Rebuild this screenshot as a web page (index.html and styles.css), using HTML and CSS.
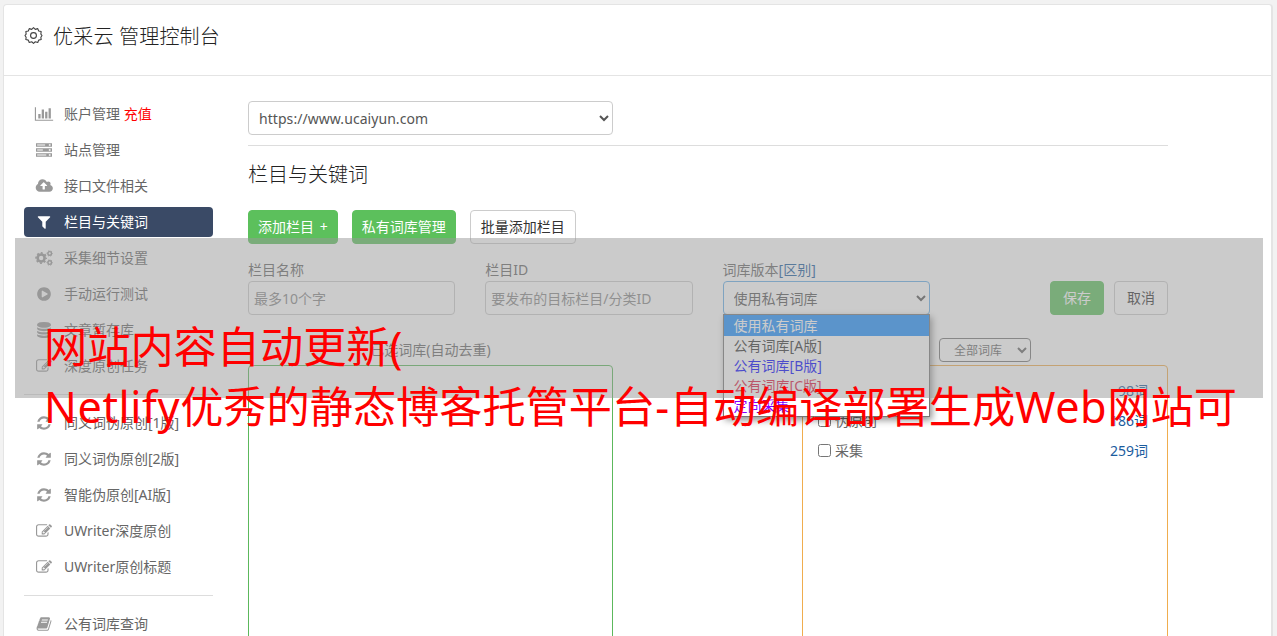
FILE: index.html
```html
<!DOCTYPE html>
<html lang="zh-CN">
<head>
  <meta charset="UTF-8">
  <title>优采云 管理控制台</title>
  <meta name="viewport" content="width=device-width, initial-scale=1.0">
  <link rel="stylesheet" href="styles.css">
</head>
<body>
  <svg class="sprite" xmlns="http://www.w3.org/2000/svg">
    <symbol id="i-chart" viewBox="0 0 2048 1792"><path d="M640 896v512h-256v-512h256zm384-512v1024h-256v-1024h256zm1024 1152v128h-2048v-1536h128v1408h1920zm-640-896v768h-256v-768h256zm384-384v1152h-256v-1152h256z"/></symbol>
    <symbol id="i-server" viewBox="0 0 1792 1792"><path fill-rule="evenodd" d="M0 128h1792v416H0zM128 272v128h896V272zM1440 240v192h192V240zM0 688h1792v416H0zM128 832v128h640V832zM1440 800v192h192V800zM0 1248h1792v416H0zM128 1392v128h1024v-128zM1440 1360v192h192v-192z"/></symbol>
    <symbol id="i-cloud" viewBox="0 0 1984 1792"><path d="M1344 864q0-14-9-23l-352-352q-9-9-23-9t-23 9l-351 351q-10 12-10 24 0 14 9 23t23 9h224v352q0 13 9.5 22.5t22.5 9.5h192q13 0 22.5-9.5t9.5-22.5v-352h224q13 0 22.5-9.5t9.5-22.5zm640 288q0 159-112.5 271.5t-271.5 112.5h-1088q-185 0-316.5-131.5t-131.5-316.5q0-130 70-240t188-165q-2-30-2-43 0-212 150-362t362-150q156 0 285.5 87t188.5 231q71-62 166-62 106 0 181 75t75 181q0 76-41 138 130 31 213.5 135.5t83.5 238.5z"/></symbol>
    <symbol id="i-filter" viewBox="0 0 1792 1792"><path d="M1595 295q17 41-14 70l-493 493v742q0 42-39 59-13 5-25 5-27 0-45-19l-256-256q-19-19-19-45v-486l-493-493q-31-29-14-70 17-39 59-39h1280q42 0 59 39z"/></symbol>
    <symbol id="i-cogs" viewBox="0 0 1920 1792">
      <g fill="none" stroke="currentColor">
        <circle cx="640" cy="896" r="390" stroke-width="290"/>
        <circle cx="640" cy="896" r="570" stroke-width="180" stroke-dasharray="224 224" stroke-dashoffset="112"/>
        <circle cx="1600" cy="384" r="200" stroke-width="160"/>
        <circle cx="1600" cy="384" r="300" stroke-width="110" stroke-dasharray="157 157" stroke-dashoffset="78"/>
        <circle cx="1600" cy="1408" r="200" stroke-width="160"/>
        <circle cx="1600" cy="1408" r="300" stroke-width="110" stroke-dasharray="157 157" stroke-dashoffset="78"/>
      </g>
    </symbol>
    <symbol id="i-play" viewBox="0 0 1792 1792"><path d="M896 128q209 0 385.5 103t279.5 279.5 103 385.5-103 385.5-279.5 279.5-385.5 103-385.5-103-279.5-279.5-103-385.5 103-385.5 279.5-279.5 385.5-103zm384 823q32-18 32-55t-32-55l-544-320q-31-19-64-1-32 19-32 56v640q0 37 32 56 16 8 32 8 17 0 32-9z"/></symbol>
    <symbol id="i-database" viewBox="0 0 1792 1792"><path d="M896 768q237 0 443-43t325-127v170q0 69-103 128t-280 93.5-385 34.5-385-34.5-280-93.5-103-128v-170q119 84 325 127t443 43zm0 768q237 0 443-43t325-127v170q0 69-103 128t-280 93.5-385 34.5-385-34.5-280-93.5-103-128v-170q119 84 325 127t443 43zm0-384q237 0 443-43t325-127v170q0 69-103 128t-280 93.5-385 34.5-385-34.5-280-93.5-103-128v-170q119 84 325 127t443 43zm0-1152q208 0 385 34.5t280 93.5 103 128v128q0 69-103 128t-280 93.5-385 34.5-385-34.5-280-93.5-103-128v-128q0-69 103-128t280-93.5 385-34.5z"/></symbol>
    <symbol id="i-edit" viewBox="0 0 1792 1792"><path d="M888 1184l116-116-152-152-116 116v56h96v96h56zm440-720q-16-16-33 1l-350 350q-17 17-1 33t33-1l350-350q17-17 1-33zm80 594v190q0 119-84.5 203.5t-203.5 84.5h-832q-119 0-203.5-84.5t-84.5-203.5v-832q0-119 84.5-203.5t203.5-84.5h832q63 0 117 25 15 7 18 23 3 17-9 29l-49 49q-14 14-32 8-23-6-45-6h-832q-66 0-113 47t-47 113v832q0 66 47 113t113 47h832q66 0 113-47t47-113v-126q0-13 9-22l64-64q15-15 35-7t20 29zm-96-738l288 288-672 672h-288v-288zm444 132l-92 92-288-288 92-92q28-28 68-28t68 28l152 152q28 28 28 68t-28 68z"/></symbol>
    <symbol id="i-refresh" viewBox="0 0 1792 1792"><path d="M1639 1056q0 5-1 7-64 268-268 434.5t-478 166.5q-146 0-282.5-55t-243.5-157l-129 129q-19 19-45 19t-45-19-19-45v-448q0-26 19-45t45-19h448q26 0 45 19t19 45-19 45l-137 137q71 66 161 102t187 36q134 0 250-65t186-179q11-17 53-117 8-23 30-23h192q13 0 22.5 9.5t9.5 22.5zm25-800v448q0 26-19 45t-45 19h-448q-26 0-45-19t-19-45 19-45l138-138q-148-137-349-137-134 0-250 65t-186 179q-11 17-53 117-8 23-30 23h-199q-13 0-22.5-9.5t-9.5-22.5v-7q65-268 270-434.5t480-166.5q146 0 284 55.5t245 156.5l130-129q19-19 45-19t45 19 19 45z"/></symbol>
    <symbol id="i-book" viewBox="0 0 1792 1792"><path d="M1703 478q40 57 18 129l-275 906q-19 64-76.5 107.5t-122.5 43.5h-923q-77 0-148.5-53.5t-99.5-131.5q-24-67-2-127 0-4 3-27t4-37q1-8-3-21.5t-3-19.5q2-11 8-21t16.5-23.5 16.5-23.5q23-38 45-91.5t30-91.5q3-10 .5-30t-.5-28q3-11 17-28t17-23q21-36 42-92t25-90q1-9-2.5-32t.5-28q4-13 22-30.5t22-22.5q19-26 42.5-84.5t27.5-96.5q1-8-3-25.5t-2-26.5q2-8 9-18t18-23 17-21q8-12 16.5-30.5t15-35 16-36 19.5-32 26.5-23.5 36-11.5 47.5 5.5l-1 3q38-9 51-9h761q74 0 114 56t18 130l-274 906q-36 119-71.5 153.5t-128.5 34.5h-869q-27 0-38 15-11 16-1 43 24 70 144 70h923q29 0 56-15.5t35-41.5l300-987q7-22 5-57 38 15 59 43zm-1064 2q-4 13 2 22.5t20 9.5h608q13 0 25.5-9.5t16.5-22.5l21-64q4-13-2-22.5t-20-9.5h-608q-13 0-25.5 9.5t-16.5 22.5zm-83 256q-4 13 2 22.5t20 9.5h608q13 0 25.5-9.5t16.5-22.5l21-64q4-13-2-22.5t-20-9.5h-608q-13 0-25.5 9.5t-16.5 22.5z"/></symbol>
  </svg>

  <div class="panel">
    <div class="panel-header">
      <svg class="gear" viewBox="0 0 18 18"><path d="M9 .7l1.9 1.8 2.6-.8 1 2.5 2.6.6-.3 2.7L18 9l-1.2 1.9.3 2.3-2.6.7-1 2.5-2.6-.8L9 17.3l-1.9-1.7-2.6.8-1-2.5-2.6-.7.3-2.3L0 9l1.2-1.5L.9 4.8l2.6-.6 1-2.5 2.6.8z"/><circle cx="9" cy="9" r="3.1"/></svg>
      <h1>优采云 管理控制台</h1>
    </div>

    <div class="panel-body">
      <div class="sidebar">
        <a class="item"><svg class="icon"><use href="#i-chart"/></svg>账户管理 <span class="red">充值</span></a>
        <a class="item"><svg class="icon"><use href="#i-server"/></svg>站点管理</a>
        <a class="item"><svg class="icon"><use href="#i-cloud"/></svg>接口文件相关</a>
        <a class="item active"><svg class="icon"><use href="#i-filter"/></svg>栏目与关键词</a>
        <a class="item"><svg class="icon"><use href="#i-cogs"/></svg>采集细节设置</a>
        <a class="item"><svg class="icon"><use href="#i-play"/></svg>手动运行测试</a>
        <a class="item"><svg class="icon"><use href="#i-database"/></svg>文章暂存库</a>
        <a class="item"><svg class="icon"><use href="#i-edit"/></svg>深度原创任务</a>
        <hr>
        <a class="item"><svg class="icon"><use href="#i-refresh"/></svg>同义词伪原创[1版]</a>
        <a class="item"><svg class="icon"><use href="#i-refresh"/></svg>同义词伪原创[2版]</a>
        <a class="item"><svg class="icon"><use href="#i-refresh"/></svg>智能伪原创[AI版]</a>
        <a class="item"><svg class="icon"><use href="#i-edit"/></svg>UWriter深度原创</a>
        <a class="item"><svg class="icon"><use href="#i-edit"/></svg>UWriter原创标题</a>
        <hr>
        <a class="item"><svg class="icon"><use href="#i-book"/></svg>公有词库查询</a>
      </div>

      <div class="main">
        <div class="site-row">
          <select class="control site"><option>https://www.ucaiyun.com</option></select>
        </div>
        <h2>栏目与关键词</h2>
        <div class="buttons">
          <button class="btn green">添加栏目 +</button>
          <button class="btn green">私有词库管理</button>
          <button class="btn">批量添加栏目</button>
        </div>

        <div class="form-row">
          <div class="field">
            <label>栏目名称</label>
            <input class="control" type="text" placeholder="最多10个字">
          </div>
          <div class="field">
            <label>栏目ID</label>
            <input class="control" type="text" placeholder="要发布的目标栏目/分类ID">
          </div>
          <div class="field">
            <label>词库版本<a class="link">[区别]</a></label>
            <select class="control focus"><option>使用私有词库</option></select>
            <div class="menu">
              <div class="option selected">使用私有词库</div>
              <div class="option">公有词库[A版]</div>
              <div class="option blue">公有词库[B版]</div>
              <div class="option crimson">公有词库[C版]</div>
              <div class="option violet">定向采集</div>
            </div>
          </div>
          <div class="form-actions">
            <button class="btn green">保存</button>
            <button class="btn">取消</button>
          </div>
        </div>

        <div class="lists">
          <div class="list-col">
            <div class="list-title">已选词库(自动去重)</div>
            <div class="list chosen"></div>
          </div>
          <div class="list-col wide">
            <div class="list-title right"><select class="filter"><option>全部词库</option></select></div>
            <div class="list source">
              <div class="row"><span></span><a class="count">98词</a></div>
              <div class="row"><label><input type="checkbox">伪原创</label><a class="count">186词</a></div>
              <div class="row"><label><input type="checkbox">采集</label><a class="count">259词</a></div>
            </div>
          </div>
        </div>
      </div>
    </div>
  </div>

  <div class="shade"></div>
  <div class="caption">网站内容自动更新(<br><span>Netlify</span>优秀的静态博客托管平台<span>-</span>自动编译部署生成<span>Web</span>网站可</div>
</body>
</html>
```
FILE: styles.css
```css
* {
  box-sizing: border-box;
}

body {
  margin: 0;
  padding: 4px 4px 0 3px;
  height: 636px;
  overflow: hidden;
  position: relative;
  background: #f2f2f2;
  color: #666;
  font-family: "Noto Sans", "Noto Sans CJK SC", sans-serif;
  font-size: 14px;
  line-height: 20px;
}

.sprite {
  display: none;
}

.panel {
  height: 660px;
  background: #fff;
  border: 1px solid #e4e4e4;
  border-right-width: 2px;
  border-radius: 4px;
}

.panel-header {
  display: flex;
  align-items: center;
  height: 71px;
  padding: 0 20px 7px;
  border-bottom: 1px solid #e4e4e4;
}

.gear {
  width: 17px;
  height: 17px;
  margin: 0 11px 3px 1px;
  fill: none;
  stroke: #444;
  stroke-width: 1.2;
  stroke-linejoin: round;
  overflow: visible;
}

h1, h2 {
  margin: 0;
  color: #222;
  font-size: 20px;
  font-weight: 300;
  line-height: 28px;
}

h1 {
  letter-spacing: .2px;
}

.panel-body {
  display: flex;
  gap: 35px;
  padding: 23px 20px 0;
}

.sidebar {
  display: flex;
  flex-direction: column;
  gap: 6px;
  flex: none;
  width: 189px;
}

.item {
  display: flex;
  align-items: center;
  height: 30px;
  padding-left: 10px;
  border-radius: 4px;
  white-space: pre;
}

.item.active {
  background: #3a4a66;
  color: #fff;
}

.icon {
  width: 20px;
  height: 16px;
  margin-right: 10px;
  fill: #999;
  color: #999;
}

.active .icon {
  fill: #fff;
}

.red {
  color: #f00;
}

hr {
  width: 100%;
  height: 1px;
  margin: 7px 0;
  border: 0;
  background: #ddd;
}

.main {
  width: 920px;
  padding-top: 2px;
}

.site-row {
  display: flex;
  height: 45px;
  border-bottom: 1px solid #ddd;
}

.control {
  width: 100%;
  height: 34px;
  padding: 6px 5px;
  border: 1px solid #ccc;
  border-radius: 4px;
  background: #fff;
  color: #555;
  font: inherit;
  outline: 0;
}

.control::placeholder {
  color: #888;
}

.site {
  width: 365px;
  padding: 6px;
  letter-spacing: .06px;
}

.focus {
  padding: 6px;
  border-color: #66afe9;
}

h2 {
  margin-top: 15px;
}

.buttons {
  display: flex;
  gap: 14px;
  margin-top: 21px;
}

.btn {
  height: 34px;
  padding: 0 10px;
  border: 1px solid #ccc;
  border-radius: 4px;
  background: #fff;
  color: #333;
  font: inherit;
  white-space: nowrap;
}

.btn.green {
  padding: 0 9px;
  border-color: #5cc05c;
  background: #5cc05c;
  color: #fff;
  word-spacing: 2px;
}

.form-row {
  display: flex;
  align-items: flex-end;
  gap: 30px;
  margin-top: 16px;
}

.field {
  position: relative;
  width: 207.3px;
}

.field label {
  display: block;
  height: 21px;
}

.link, .count {
  color: #1b5c9e;
}

.menu {
  position: absolute;
  top: 54px;
  left: 0;
  z-index: 2;
  width: 100%;
  height: 103px;
  border: 1px solid #767676;
  background: #fff;
  box-shadow: 2px 3px 7px rgba(0, 0, 0, .45);
}

.option {
  height: 20px;
  padding-left: 10px;
  line-height: 20px;
  color: #333;
}

.option.selected {
  height: 21px;
  line-height: 22px;
  background: #1e90ff;
  color: #fff;
}

.option.blue {
  color: #00f;
}

.option.crimson {
  color: #dc143c;
}

.option.violet {
  color: #7f00ff;
}

.form-actions {
  display: flex;
  gap: 10px;
  margin-left: auto;
}

.form-actions .btn {
  width: 54px;
}

.lists {
  display: flex;
  justify-content: space-between;
  margin-top: 23px;
}

.list-col {
  width: 365px;
}

.list-col.wide {
  width: 366px;
}

.list-title {
  height: 27px;
  line-height: 24px;
  text-align: center;
}

.list-title.right {
  display: flex;
  padding-left: 137px;
}

.filter {
  width: 92px;
  height: 24px;
  padding-left: 10px;
  border: 1px solid #767676;
  border-radius: 4px;
  background: #fff;
  color: #666;
  font: inherit;
  font-size: 12px;
}

.list {
  height: 300px;
  border: 1px solid #5cb85c;
  border-radius: 4px;
}

.list.source {
  padding: 10px 19px 0 15px;
  border-color: #f0ad4e;
}

.row {
  display: flex;
  justify-content: space-between;
  align-items: center;
  height: 30px;
}

.row label {
  display: flex;
  align-items: center;
}

.row input {
  width: 13px;
  height: 13px;
  margin: 0 4px 2px 0;
}

/* translucent strip and title drawn over the whole console */
.shade {
  position: absolute;
  top: 238px;
  left: 15px;
  z-index: 5;
  width: 1248px;
  height: 160px;
  background: rgba(151, 151, 151, .5);
}

.caption {
  position: absolute;
  top: 317px;
  left: 44px;
  z-index: 6;
  color: #f00;
  font-size: 43.2px;
  line-height: 60px;
  white-space: nowrap;
}

.caption span {
  letter-spacing: .6px;
}
```
